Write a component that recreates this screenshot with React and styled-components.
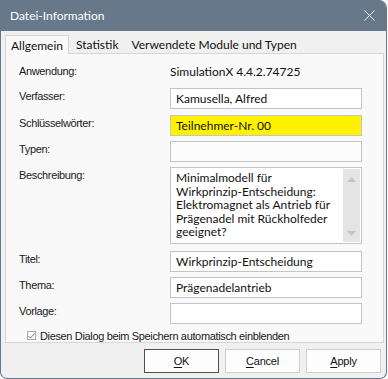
import React from "react"
import styled, { createGlobalStyle } from 'styled-components'

const Global = createGlobalStyle`
  body {
    margin: 0;
    background: #ffffff;
  }
  * { box-sizing: border-box; }
`

const Window = styled.div`
  width: 387px;
  height: 379px;
  border: 1px solid #67778a;
  border-top: none;
  border-radius: 0 8px 7px 7px;
  overflow: hidden;
  background: #f0f0f0;
  display: flex;
  flex-direction: column;
`

const TitleBar = styled.div`
  height: 31px;
  flex: none;
  background: #68788b;
  display: flex;
  align-items: center;
  justify-content: space-between;
  padding: 0 7px 0 9px;
  color: #ffffff;
  font-family: "Segoe UI", Lato, "Noto Sans", sans-serif;
  font-size: 12px;
`

const CloseBtn = styled.div`
  width: 20px;
  height: 20px;
  display: flex;
  align-items: center;
  justify-content: center;
`

const Body = styled.div`
  padding: 4px 0 0 4px;
`

const TabStrip = styled.div`
  display: flex;
  height: 18px;
  font-family: "Segoe UI", Lato, "Noto Sans", sans-serif;
  font-size: 12px;
  color: #111;
`

const Tab = styled.div`
  height: ${p => (p.$active ? "19px" : "18px")};
  padding: ${p => (p.$active ? "0 5px" : "0 6px 0 7px")};
  display: flex;
  align-items: center;
  background: ${p => (p.$active ? "#f9f9f9" : "transparent")};
  border: ${p => (p.$active ? "1px solid #d6d6d6" : "none")};
  border-bottom: none;
  position: relative;
  z-index: 1;
`

const Panel = styled.div`
  width: 379px;
  height: 290px;
  border: 1px solid #d6d6d6;
  background: #f9f9f9;
  padding: 9px 0 0 13px;
  display: grid;
  grid-template-columns: 151px 192px;
  grid-auto-rows: auto;
  row-gap: 5px;
  align-items: start;
`

const Label = styled.div`
  font-family: "Liberation Sans", Arial, sans-serif;
  font-size: 11px;
  letter-spacing: -0.35px;
  line-height: 13px;
  padding-top: 2px;
  color: #1a1a1a;
`

const Value = styled.div`
  font-family: "Segoe UI", Lato, "Noto Sans", sans-serif;
  font-size: 12px;
  line-height: 15px;
  padding-top: 1px;
  color: #111;
  height: 20px;
`

const Field = styled.div`
  height: 21px;
  border: 1px solid #c4c4c4;
  background: ${p => p.$bg || "#ffffff"};
  font-family: "Segoe UI", Lato, "Noto Sans", sans-serif;
  font-size: 12px;
  color: #111;
  display: flex;
  align-items: center;
  padding-left: 5px;
  white-space: nowrap;
`

const Memo = styled.div`
  height: 77px;
  border: 1px solid #c4c4c4;
  background: #ffffff;
  display: flex;
  margin-bottom: 1px;
`

const MemoText = styled.div`
  flex: 1;
  padding: 3px 0 0 5px;
  font-family: "Segoe UI", Lato, "Noto Sans", sans-serif;
  font-size: 12px;
  line-height: 13.5px;
  color: #111;
  white-space: nowrap;
`

const ScrollBar = styled.div`
  width: 17px;
  margin: 1px 1px 1px 0;
  background: #e4e4e4;
  display: flex;
  flex-direction: column;
  justify-content: space-between;
  align-items: center;
  padding: 8px 0 6px;
`

const CheckRow = styled.label`
  grid-column: 1 / 3;
  display: flex;
  align-items: center;
  gap: 4px;
  padding: 0 0 0 8px;
  font-family: "Liberation Sans", Arial, sans-serif;
  font-size: 11px;
  letter-spacing: -0.35px;
  color: #1a1a1a;
`

const CheckBox = styled.span`
  width: 9px;
  height: 9px;
  border: 1px solid #a8a8a8;
  background: #fbfbfb;
  display: flex;
  align-items: center;
  justify-content: center;
`

const Footer = styled.div`
  display: flex;
  justify-content: flex-end;
  gap: 6px;
  padding: 6px 5px 0 0;
`

const Button = styled.div`
  width: 75px;
  height: 24px;
  border: 1px solid ${p => (p.$default ? "#4f4f4f" : "#cfcfcf")};
  background: #fdfdfd;
  display: flex;
  align-items: center;
  justify-content: center;
  font-family: "Liberation Sans", Arial, sans-serif;
  font-size: 11px;
  letter-spacing: -0.2px;
  color: #111;

  u { text-decoration: underline; text-underline-offset: 2px; }
`

const Arrow = ({ up }) => (
  <svg width="9" height="5" viewBox="0 0 9 5">
    <path d={up ? "M0 5 L4.5 0 L9 5 Z" : "M0 0 L4.5 5 L9 0 Z"} fill="#c6c6c6" />
  </svg>
)

const fields = [
  { label: "Verfasser:", value: "Kamusella, Alfred" },
  { label: "Schlüsselwörter:", value: "Teilnehmer-Nr. 00", bg: "#fff200" },
  { label: "Typen:", value: "", bg: "#fcfcfc" },
]

const lowerFields = [
  { label: "Titel:", value: "Wirkprinzip-Entscheidung" },
  { label: "Thema:", value: "Prägenadelantrieb" },
  { label: "Vorlage:", value: "" },
]

const memoLines = [
  "Minimalmodell für",
  "Wirkprinzip-Entscheidung:",
  "Elektromagnet als Antrieb für",
  "Prägenadel mit Rückholfeder",
  "geeignet?",
]

export default function App() {
  return (
    <>
      <Global />
      <Window>
        <TitleBar>
          <span>Datei-Information</span>
          <CloseBtn>
            <svg width="11" height="11" viewBox="0 0 11 11">
              <path d="M0.5 0.5 L10.5 10.5 M10.5 0.5 L0.5 10.5" stroke="#ffffff" strokeWidth="1" />
            </svg>
          </CloseBtn>
        </TitleBar>
        <Body>
          <TabStrip>
            <Tab $active>Allgemein</Tab>
            <Tab>Statistik</Tab>
            <Tab>Verwendete Module und Typen</Tab>
          </TabStrip>
          <Panel>
            <Label>Anwendung:</Label>
            <Value>SimulationX 4.4.2.74725</Value>
            {fields.map(f => (
              <React.Fragment key={f.label}>
                <Label>{f.label}</Label>
                <Field $bg={f.bg}>{f.value}</Field>
              </React.Fragment>
            ))}
            <Label>Beschreibung:</Label>
            <Memo>
              <MemoText>
                {memoLines.map(l => <div key={l}>{l}</div>)}
              </MemoText>
              <ScrollBar>
                <Arrow up />
                <Arrow />
              </ScrollBar>
            </Memo>
            {lowerFields.map(f => (
              <React.Fragment key={f.label}>
                <Label>{f.label}</Label>
                <Field>{f.value}</Field>
              </React.Fragment>
            ))}
            <CheckRow>
              <CheckBox>
                <svg width="7" height="6" viewBox="0 0 7 6">
                  <path d="M0.5 3 L2.5 5 L6.5 0.5" stroke="#7a7a7a" strokeWidth="1" fill="none" />
                </svg>
              </CheckBox>
              Diesen Dialog beim Speichern automatisch einblenden
            </CheckRow>
          </Panel>
          <Footer>
            <Button $default><span><u>O</u>K</span></Button>
            <Button><span><u>C</u>ancel</span></Button>
            <Button><span><u>A</u>pply</span></Button>
          </Footer>
        </Body>
      </Window>
    </>
  )
}
